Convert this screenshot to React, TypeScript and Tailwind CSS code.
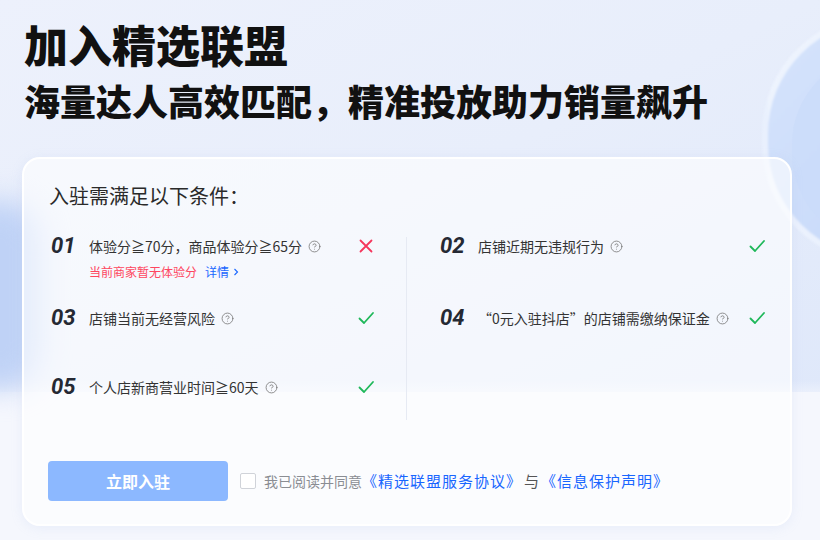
import { CircleHelp } from 'lucide-react';

const CN = { fontFamily: '"Noto Sans CJK SC", "Noto Sans", sans-serif' };
const NUM = { fontFamily: 'Roboto, "Noto Sans", sans-serif' };

function Check() {
  return (
    <svg width="18" height="18" viewBox="0 0 18 18" fill="none">
      <path d="M2.5 9.5 L7 14 L16 4" stroke="#1fb85a" strokeWidth="1.8" strokeLinecap="round" strokeLinejoin="round" />
    </svg>
  );
}

function Cross() {
  return (
    <svg width="16" height="16" viewBox="0 0 16 16" fill="none">
      <path d="M2.5 2.5 L13.5 13.5 M13.5 2.5 L2.5 13.5" stroke="#f5365c" strokeWidth="1.8" strokeLinecap="round" />
    </svg>
  );
}

function Rule({ no, text, ok, sub }: { no: string; text: string; ok: boolean; sub?: boolean }) {
  return (
    <div className="flex flex-col">
      <div className="flex items-center h-[18px]">
        <span style={NUM} className="w-[41px] pl-[3px] text-[22px] font-bold italic text-[#252933] leading-none">
          {no}
        </span>
        <span className="text-[14px] text-[#333] leading-none">{text}</span>
        <CircleHelp size={13} strokeWidth={1.5} className="ml-[6px] text-[#777]" />
        <span className="ml-auto flex w-[18px] justify-center">{ok ? <Check /> : <Cross />}</span>
      </div>
      {sub && (
        <div className="mt-[8px] flex items-center pl-[41px] text-[12px] leading-[18px]">
          <span className="text-[#fe4660]">当前商家暂无体验分</span>
          <span className="ml-[8px] text-[#1966ff]">详情</span>
          <svg width="10" height="10" viewBox="0 0 10 10" className="ml-[2px]">
            <path d="M3.5 2 L6.5 5 L3.5 8" stroke="#1966ff" strokeWidth="1.1" fill="none" />
          </svg>
        </div>
      )}
    </div>
  );
}

export default function App() {
  return (
    <div style={CN} className="relative w-[820px] h-[540px] overflow-hidden bg-[#f5f7fd]">
      {/* banner background */}
      <div className="absolute left-0 top-0 w-[820px] h-[392px] bg-gradient-to-br from-[#edf1fc] via-[#e8eefb] to-[#dfe8fa]" />
      <div className="absolute left-0 top-[380px] w-[820px] h-[24px] bg-gradient-to-b from-[#e4ebfa]/0 to-[#f5f7fd]" />
      <div className="absolute -left-[40px] top-[200px] w-[80px] h-[190px] rounded-full bg-[#bfd2f6] blur-[14px]" />
      <div className="absolute left-[762px] top-[14px] w-[240px] h-[250px] rounded-full bg-gradient-to-br from-[#d6e4fc] to-[#c3d6f8] border-[6px] border-white/60 blur-[1px]" />
      <div className="absolute left-[792px] top-[54px] w-[180px] h-[190px] rounded-full bg-[#cbdcfa]/70" />

      <div className="relative flex flex-col px-[22px] pt-[21px]">
        <h1 className="pl-[2px] text-[44px] font-black leading-[46px] text-[#111]">加入精选联盟</h1>
        <h2 className="mt-[13px] pl-[2px] text-[36px] font-black leading-[40px] text-[#111]">
          海量达人高效匹配，精准投放助力销量飙升
        </h2>

        <div className="mt-[37px] w-[770px] h-[369px] rounded-[18px] border-2 border-white bg-white/60 px-[24px] pt-[23px] shadow-[0_2px_12px_rgba(160,180,230,0.15)]">
          <div className="pl-[1px] text-[20px] leading-[28px] text-[#2a2a2a]">入驻需满足以下条件：</div>

          <div className="mt-[27px] flex">
            <div className="w-[359px] pr-[31px] border-r border-[#e6eaf3]">
              <div className="h-[72px]">
                <Rule no="01" text="体验分≧70分，商品体验分≧65分" ok={false} sub />
              </div>
              <div className="h-[69px]">
                <Rule no="03" text="店铺当前无经营风险" ok />
              </div>
              <div className="h-[42px]">
                <Rule no="05" text="个人店新商营业时间≧60天" ok />
              </div>
            </div>
            <div className="flex-1 pl-[30px]">
              <div className="h-[72px]">
                <Rule no="02" text="店铺近期无违规行为" ok />
              </div>
              <div className="h-[69px]">
                <Rule no="04" text="“0元入驻抖店”的店铺需缴纳保证金" ok />
              </div>
            </div>
          </div>

          <div className="mt-[41px] flex items-center">
            <button className="w-[180px] h-[40px] rounded-[4px] bg-[#8cb8ff] text-[16px] font-bold text-white">
              立即入驻
            </button>
            <span className="ml-[12px] w-[16px] h-[16px] rounded-[2px] border border-[#d0d3d9] bg-white" />
            <span className="ml-[8px] text-[14px] text-[#8a8d93]">我已阅读并同意</span>
            <span className="text-[15px] tracking-[1px] text-[#1966ff]">《精选联盟服务协议》</span>
            <span className="ml-[2px] text-[15px] text-[#555]">与</span>
            <span className="ml-[2px] text-[15px] tracking-[1px] text-[#1966ff]">《信息保护声明》</span>
          </div>
        </div>
      </div>
    </div>
  );
}
